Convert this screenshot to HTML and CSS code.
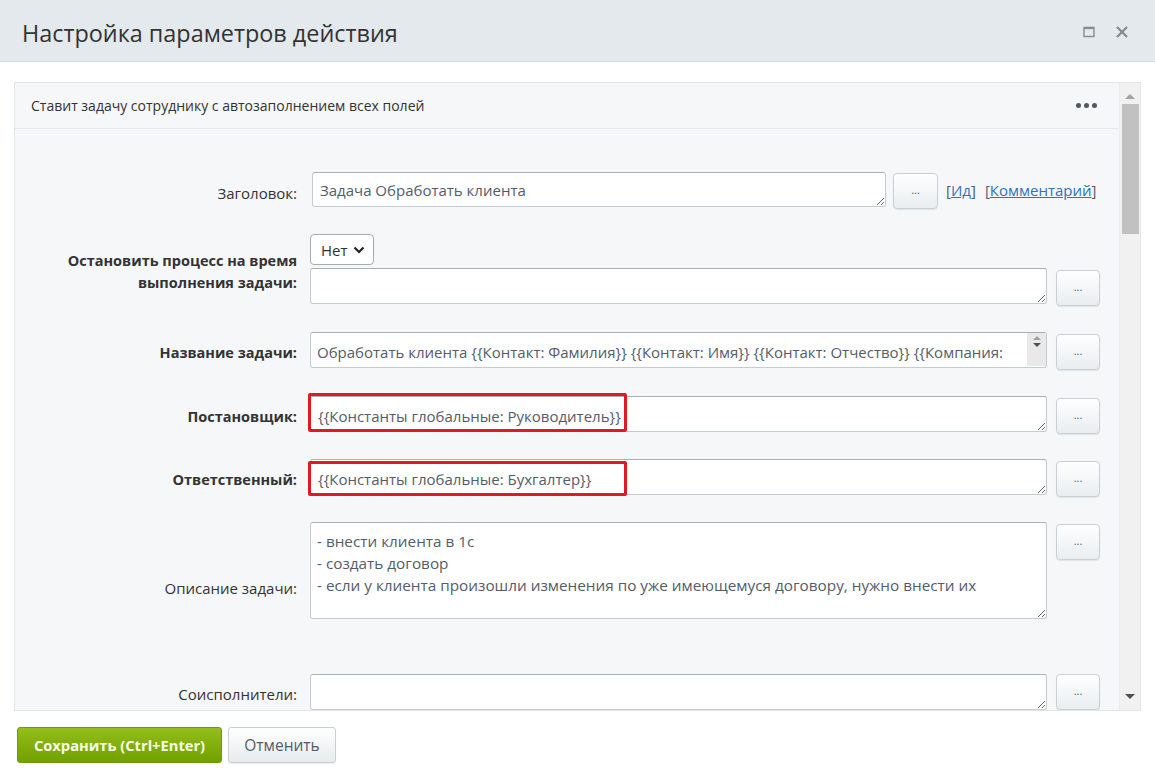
FILE: index.html
```html
<!DOCTYPE html>
<html lang="ru">
<head>
<meta charset="utf-8">
<title>Настройка параметров действия</title>
<link rel="stylesheet" href="styles.css">
</head>
<body>
<div class="header">
  <h1 class="title">Настройка параметров действия</h1>
  <div class="win-icons">
    <svg class="win-icon" width="14" height="14" viewBox="0 0 14 14"><rect x="2" y="2.5" width="10" height="9" fill="none" stroke="#848d94" stroke-width="1.4"/><line x1="2" y1="3" x2="12" y2="3" stroke="#848d94" stroke-width="2.2"/></svg>
    <svg class="win-icon close" width="14" height="14" viewBox="0 0 14 14"><path d="M2 2 L12 12 M12 2 L2 12" stroke="#7d878e" stroke-width="2" fill="none"/></svg>
  </div>
</div>

<div class="main">
  <div class="panel">
    <div class="panel-body">
      <div class="panel-head">
        <span>Ставит задачу сотруднику с автозаполнением всех полей</span>
        <span class="dots"><i></i><i></i><i></i></span>
      </div>
      <div class="form">
        <div class="row">
          <div class="label">Заголовок:</div>
          <div class="field field-first">
            <textarea class="ta ta-title">Задача Обработать клиента</textarea>
            <button class="more more-first">...</button>
            <span class="links">[<a href="#">Ид</a>]<span class="sp"></span>[<a href="#">Комментарий</a>]</span>
          </div>
        </div>

        <div class="row row-wide">
          <div class="label bold">Остановить процесс на время<br>выполнения задачи:</div>
          <div class="field-col">
            <div class="select">Нет<svg width="12" height="8" viewBox="0 0 12 8"><path d="M1.5 1.5 L6 6 L10.5 1.5" stroke="#222" stroke-width="2.2" fill="none"/></svg></div>
            <div class="field">
              <textarea class="ta"></textarea>
              <button class="more">...</button>
            </div>
          </div>
        </div>

        <div class="row row-wide">
          <div class="label bold">Название задачи:</div>
          <div class="field">
            <div class="wrap">
              <textarea class="ta ta-scroll">Обработать клиента {{Контакт: Фамилия}} {{Контакт: Имя}} {{Контакт: Отчество}} {{Компания: Название}}</textarea>
              <div class="spin"><span class="tri-up"></span><span class="tri-down"></span></div>
            </div>
            <button class="more">...</button>
          </div>
        </div>

        <div class="row">
          <div class="label bold">Постановщик:</div>
          <div class="field">
            <div class="wrap">
              <textarea class="ta">{{Константы глобальные: Руководитель}}</textarea>
              <div class="highlight hl1"></div>
            </div>
            <button class="more">...</button>
          </div>
        </div>

        <div class="row">
          <div class="label bold">Ответственный:</div>
          <div class="field">
            <div class="wrap">
              <textarea class="ta">{{Константы глобальные: Бухгалтер}}</textarea>
              <div class="highlight hl2"></div>
            </div>
            <button class="more">...</button>
          </div>
        </div>

        <div class="row">
          <div class="label">Описание задачи:</div>
          <div class="field field-tall">
            <textarea class="ta ta-desc">- внести клиента в 1с
- создать договор
- если у клиента произошли изменения по уже имеющемуся договору, нужно внести их</textarea>
            <button class="more">...</button>
          </div>
        </div>

        <div class="row">
          <div class="label">Соисполнители:</div>
          <div class="field">
            <textarea class="ta"></textarea>
            <button class="more more-flush">...</button>
          </div>
        </div>
      </div>
    </div>
    <div class="scrollbar">
      <span class="sb-up"></span>
      <div class="sb-thumb"></div>
      <div class="sb-fill"></div>
      <span class="sb-down"></span>
    </div>
  </div>
</div>

<div class="footer">
  <button class="btn btn-save">Сохранить (Ctrl+Enter)</button>
  <button class="btn btn-cancel">Отменить</button>
</div>
</body>
</html>
```

FILE: styles.css
```css
* { box-sizing: border-box; }
html, body { margin: 0; padding: 0; }
body {
  width: 1155px;
  height: 781px;
  overflow: hidden;
  background: #ffffff;
  font-family: "Open Sans", "Noto Sans", sans-serif;
  font-size: 14px;
  color: #333;
}

.header {
  height: 62px;
  background: #e3e9ec;
  border-bottom: 1px solid #d3d8db;
  display: flex;
  align-items: center;
  justify-content: space-between;
  padding: 4px 26px 0 22px;
}
.title {
  margin: 0;
  font-weight: 400;
  font-size: 23.4px;
  color: #333;
}
.win-icons { display: flex; align-items: center; gap: 19px; padding-bottom: 2px; }
.win-icon { display: block; }

.main { padding: 20px 14px 0 14px; }
.panel {
  height: 629px;
  border: 1px solid #e2e6e8;
  display: flex;
  background: #f5f7f8;
}
.panel-body { flex: 1; display: flex; flex-direction: column; overflow: hidden; }
.panel-head {
  height: 46px;
  flex: none;
  border-bottom: 1px solid #e3e7e9;
  display: flex;
  align-items: center;
  justify-content: space-between;
  padding: 0 22px 0 16px;
  font-size: 14px;
  color: #333;
}
.dots { display: flex; gap: 3px; }
.dots i { width: 5px; height: 5px; border-radius: 50%; background: #4f5863; display: block; }

.form { flex: 1; overflow: hidden; padding-top: 43px; }
.row {
  display: grid;
  grid-template-columns: 282px auto;
  column-gap: 13px;
  align-items: center;
  margin-bottom: 25px;
}
.row-wide { margin-bottom: 26px; }
.label {
  text-align: right;
  color: #333;
  font-size: 15px;
  line-height: 22px;
  padding-top: 4px;
}
.label.bold { font-weight: 700; font-size: 14.5px; }

.field { display: flex; align-items: flex-start; }
.field-first { padding-left: 2px; }
.field-col { display: flex; flex-direction: column; }
.field-tall { padding-bottom: 30px; }
.wrap { position: relative; }

.ta {
  display: block;
  width: 737px;
  height: 36px;
  border: 1px solid #c5cbd0;
  border-top-color: #a9afb4;
  border-radius: 3px;
  background: #fff;
  padding: 8px 7px 6px;
  font-family: "Open Sans", "Noto Sans", sans-serif;
  font-size: 15px;
  line-height: 22px;
  color: #535c69;
  overflow: hidden;
  resize: both;
  margin: 0;
}
.ta-title { width: 574px; height: 35px; padding-top: 6px; }
.ta-desc { height: 97px; padding-top: 7px; padding-left: 6px; font-size: 15.3px; }
.ta-scroll { padding-right: 24px; padding-left: 6px; }

.spin {
  position: absolute;
  right: 1px;
  top: 1px;
  width: 19px;
  height: 33px;
  background: #e9e9e9;
  display: flex;
  flex-direction: column;
  align-items: center;
  padding-top: 3px;
  gap: 3px;
}
.tri-up { width: 0; height: 0; border-left: 4px solid transparent; border-right: 4px solid transparent; border-bottom: 4px solid #a0a0a0; }
.tri-down { width: 0; height: 0; border-left: 4px solid transparent; border-right: 4px solid transparent; border-top: 4px solid #505050; }

.highlight {
  position: absolute;
  left: -2px;
  width: 319px;
  height: 39px;
  border: 3px solid #df1a23;
  border-radius: 2px;
  pointer-events: none;
}
.hl1 { top: -3px; }
.hl2 { top: 2px; height: 35px; }

.more {
  margin: 2px 0 0 9px;
  width: 44px;
  height: 36px;
  border: 1px solid #c9d0d5;
  border-radius: 4px;
  background: linear-gradient(#ffffff, #e9edef);
  box-shadow: 0 1px 1px rgba(0,0,0,0.08);
  color: #59626b;
  font-family: "Open Sans", sans-serif;
  font-size: 11px;
  line-height: 1;
  padding: 0 0 4px;
}
.more-first { margin: 1px 0 0 7px; width: 45px; }
.more-flush { margin-top: 0; }

.links {
  margin: 8px 0 0 8px;
  color: #535c69;
  font-size: 15px;
  line-height: 20px;
}
.links a { color: #2f73b8; text-decoration: underline; }
.links .sp { display: inline-block; width: 9px; }

.select {
  width: 64px;
  height: 31px;
  border: 1px solid #a6acb1;
  border-radius: 4px;
  background: #fff;
  display: flex;
  align-items: center;
  justify-content: space-between;
  padding: 0 8px 0 10px;
  font-size: 15px;
  color: #333;
  margin-bottom: 3px;
}
.select svg { display: block; }

.scrollbar {
  width: 21px;
  flex: none;
  background: #f1f1f1;
  border-left: 1px solid #e9ecee;
  display: flex;
  flex-direction: column;
  align-items: center;
  padding: 11px 0 11px;
}
.sb-up { width: 0; height: 0; border-left: 5px solid transparent; border-right: 5px solid transparent; border-bottom: 5px solid #a3a3a3; }
.sb-down { width: 0; height: 0; border-left: 5px solid transparent; border-right: 5px solid transparent; border-top: 5px solid #505050; }
.sb-thumb { width: 17px; height: 130px; background: #c1c1c1; margin-top: 5px; }
.sb-fill { flex: 1; }

.footer { display: flex; gap: 6px; padding: 16px 0 0 17px; }
.btn {
  height: 36px;
  border-radius: 3px;
  font-family: "Open Sans", sans-serif;
  padding: 0;
}
.btn-save {
  width: 205px;
  border: 1px solid #6f9a07;
  background: linear-gradient(#93be1b, #72a000);
  color: #f4fde2;
  font-weight: 700;
  font-size: 14.7px;
}
.btn-cancel {
  width: 108px;
  border: 1px solid #c9d0d5;
  background: linear-gradient(#ffffff, #e7ebed);
  color: #535c69;
  font-size: 15.5px;
  box-shadow: 0 1px 1px rgba(0,0,0,0.08);
}
```
